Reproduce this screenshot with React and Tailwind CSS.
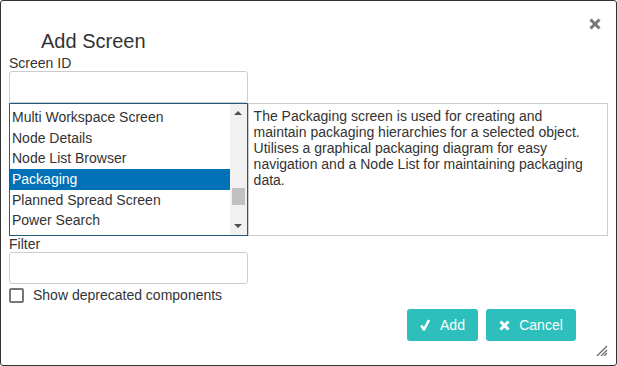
import React from 'react';

const items = [
  'Multi Workspace Screen',
  'Node Details',
  'Node List Browser',
  'Packaging',
  'Planned Spread Screen',
  'Power Search',
];

function CloseIcon() {
  return (
    <svg width="12" height="12" viewBox="0 0 12 12">
      <path d="M1.5 1.5L10.5 10.5M10.5 1.5L1.5 10.5" stroke="#777" strokeWidth="3" strokeLinecap="butt" />
    </svg>
  );
}

function Scrollbar() {
  return (
    <div className="w-[17px] h-full bg-[#f1f1f1] flex flex-col items-center">
      <div className="h-[17px] flex items-center justify-center">
        <svg width="8" height="5" viewBox="0 0 8 5"><path d="M0 5L4 1L8 5Z" fill="#505050" /></svg>
      </div>
      <div className="flex-1 w-full px-[2px] pt-[67px]">
        <div className="h-[17px] bg-[#c1c1c1]" />
      </div>
      <div className="h-[17px] flex items-center justify-center">
        <svg width="8" height="5" viewBox="0 0 8 5"><path d="M0 0L4 4L8 0Z" fill="#505050" /></svg>
      </div>
    </div>
  );
}

export default function App() {
  return (
    <div className="w-[617px] h-[366px] bg-white border border-[#333] rounded-[3px] text-[#333] font-['Liberation_Sans',Arial,sans-serif] text-[14px] flex flex-col px-[8px] overflow-hidden">
      <div className="flex justify-end h-[28px] pt-[17px] pr-[7px]">
        <CloseIcon />
      </div>
      <div className="pl-[32px] text-[20px] leading-[23px] h-[27px] pt-[1px]">Add Screen</div>
      <div className="leading-[15px] h-[15px]">Screen ID</div>
      <div className="w-[239px] h-[32px] border border-[#ccc] rounded-[3px]" />

      <div className="flex h-[133px]">
        <div className="w-[239px] h-full border border-[#245a80] flex overflow-hidden">
          <div className="flex-1 pt-[3px] overflow-hidden">
            {items.map((it) => (
              <div
                key={it}
                className={`h-[20.7px] leading-[20.7px] pl-[2px] whitespace-nowrap ${
                  it === 'Packaging' ? 'bg-[#0071b6] text-white' : ''
                }`}
              >
                {it}
              </div>
            ))}
          </div>
          <Scrollbar />
        </div>
        <div className="w-[361px] h-full border border-[#ccc] pt-[4px] pl-[5px] pr-[12px] leading-[16px]">
          The Packaging screen is used for creating and maintain packaging hierarchies for a selected object. Utilises a graphical packaging diagram for easy navigation and a Node List for maintaining packaging data.
        </div>
      </div>

      <div className="leading-[16px] h-[16px]">Filter</div>
      <div className="w-[239px] h-[32px] border border-[#ccc] rounded-[3px]" />

      <label className="flex items-center gap-[9px] mt-[4px] h-[15px]">
        <span className="w-[15px] h-[15px] border-2 border-[#777] rounded-[2px] bg-white" />
        <span className="leading-[15px]">Show deprecated components</span>
      </label>

      <div className="flex justify-end gap-[8px] mt-[6px] pr-[32px]">
        <button className="w-[71px] h-[32px] bg-[#2cbfbc] rounded-[3px] text-white flex items-center justify-center gap-[10px]">
          <svg width="10" height="12" viewBox="0 0 10 12">
            <path d="M1.2 6.5L4 10.5L9 1" stroke="#fff" strokeWidth="2.6" fill="none" strokeLinejoin="round" />
          </svg>
          <span>Add</span>
        </button>
        <button className="w-[90px] h-[32px] bg-[#2cbfbc] rounded-[3px] text-white flex items-center justify-center gap-[9px]">
          <svg width="11" height="11" viewBox="0 0 11 11">
            <path d="M1.5 1.5L9.5 9.5M9.5 1.5L1.5 9.5" stroke="#fff" strokeWidth="3" />
          </svg>
          <span>Cancel</span>
        </button>
      </div>

      <div className="flex justify-end mt-[4px]">
        <svg width="12" height="11" viewBox="0 0 12 11">
          <path d="M11 1L1 11M11 5L5 11M11 8L8 11" stroke="#666" strokeWidth="1.2" />
        </svg>
      </div>
    </div>
  );
}
